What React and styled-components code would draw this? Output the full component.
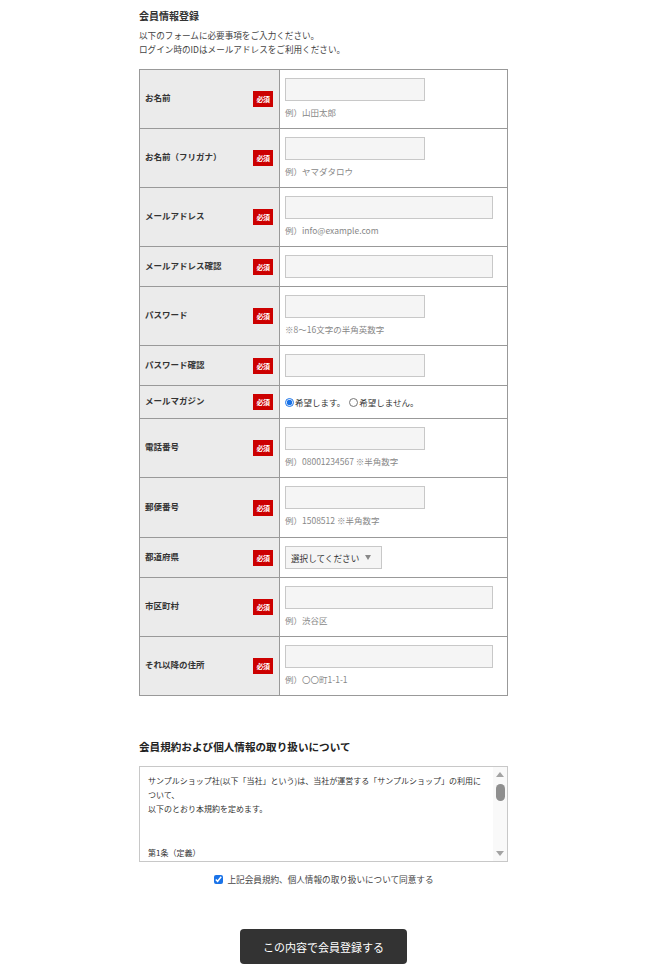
import React from "react";
import styled, { createGlobalStyle } from "styled-components";

const GlobalStyle = createGlobalStyle`
  html, body {
    margin: 0;
    padding: 0;
    background: #ffffff;
  }
  body {
    font-family: "Noto Sans CJK JP", "Noto Sans", sans-serif;
    color: #333333;
  }
`;

const rows = [
  { label: "お名前", type: "input", size: "short", hint: "例）山田太郎" },
  { label: "お名前（フリガナ）", type: "input", size: "short", hint: "例）ヤマダタロウ" },
  { label: "メールアドレス", type: "input", size: "wide", hint: "例）info@example.com" },
  { label: "メールアドレス確認", type: "input", size: "wide" },
  { label: "パスワード", type: "input", size: "short", hint: "※8～16文字の半角英数字" },
  { label: "パスワード確認", type: "input", size: "short" },
  { label: "メールマガジン", type: "radio" },
  { label: "電話番号", type: "input", size: "short", hint: "例）08001234567 ※半角数字" },
  { label: "郵便番号", type: "input", size: "short", hint: "例）1508512 ※半角数字", tall: true },
  { label: "都道府県", type: "select" },
  { label: "市区町村", type: "input", size: "wide", hint: "例）渋谷区" },
  { label: "それ以降の住所", type: "input", size: "wide", hint: "例）〇〇町1-1-1" },
];

const App = () => {
  return (
    <>
      <GlobalStyle />
      <Page>
        <Title>会員情報登録</Title>
        <Intro>
          以下のフォームに必要事項をご入力ください。
          <br />
          ログイン時のIDはメールアドレスをご利用ください。
        </Intro>

        <FormTable>
          {rows.map((row) => (
            <Row key={row.label}>
              <LabelCell>
                <LabelText>{row.label}</LabelText>
                <Required>必須</Required>
              </LabelCell>
              <FieldCell $tall={row.tall}>
                {row.type === "input" && <TextInput $size={row.size} />}
                {row.type === "radio" && (
                  <RadioGroup>
                    <RadioLabel>
                      <Radio type="radio" name="mag" defaultChecked />
                      希望します。
                    </RadioLabel>
                    <RadioLabel>
                      <Radio type="radio" name="mag" />
                      希望しません。
                    </RadioLabel>
                  </RadioGroup>
                )}
                {row.type === "select" && (
                  <SelectBox>
                    選択してください
                    <Caret />
                  </SelectBox>
                )}
                {row.hint && <Hint>{row.hint}</Hint>}
              </FieldCell>
            </Row>
          ))}
        </FormTable>

        <SectionTitle>会員規約および個人情報の取り扱いについて</SectionTitle>
        <TermsBox>
          <TermsText>
            <p>
              サンプルショップ社(以下「当社」という)は、当社が運営する「サンプルショップ」の利用について、
              <br />
              以下のとおり本規約を定めます。
            </p>
            <p>第1条（定義）</p>
          </TermsText>
          <ScrollTrack>
            <ArrowUp />
            <Thumb />
            <Spacer />
            <ArrowDown />
          </ScrollTrack>
        </TermsBox>

        <AgreeRow>
          <Check type="checkbox" defaultChecked />
          上記会員規約、個人情報の取り扱いについて同意する
        </AgreeRow>

        <ButtonRow>
          <SubmitButton>この内容で会員登録する</SubmitButton>
        </ButtonRow>
      </Page>
    </>
  );
};

// Styles
const Page = styled.div`
  width: 369px;
  margin-left: 139px;
  padding-top: 8px;
`;

const Title = styled.h1`
  margin: 0;
  font-size: 10px;
  line-height: 15px;
  font-weight: 700;
  color: #333;
`;

const Intro = styled.p`
  margin: 5px 0 0;
  font-size: 8.6px;
  line-height: 14px;
  color: #444;
`;

const FormTable = styled.div`
  margin-top: 13px;
  border: 1px solid #999;
  border-top: none;
`;

const Row = styled.div`
  display: grid;
  grid-template-columns: 140px 1fr;
  border-top: 1px solid #999;
`;

const LabelCell = styled.div`
  box-sizing: border-box;
  background: #ebebeb;
  border-right: 1px solid #999;
  display: flex;
  align-items: center;
  justify-content: space-between;
  padding: 0 6px 0 5px;
`;

const LabelText = styled.span`
  font-size: 8.5px;
  font-weight: 700;
  color: #333;
  margin-top: -4px;
`;

const Required = styled.span`
  width: 20px;
  height: 16px;
  background: #cc0000;
  color: #fff;
  font-size: 7px;
  font-weight: 700;
  line-height: 16px;
  text-align: center;
  letter-spacing: -0.5px;
`;

const FieldCell = styled.div`
  padding: 8px 5px ${(p) => (p.$tall ? "9px" : "8px")};
  display: flex;
  flex-direction: column;
  align-items: flex-start;
`;

const TextInput = styled.input`
  box-sizing: border-box;
  width: ${(p) => (p.$size === "wide" ? "208px" : "140px")};
  height: 23px;
  margin: 0;
  background: #f5f5f5;
  border: 1px solid #c8c8c8;
  border-radius: 0;
  outline: none;
`;

const Hint = styled.span`
  margin-top: 4px;
  font-size: 8.5px;
  line-height: 15px;
  color: #888;
`;

const RadioGroup = styled.div`
  display: flex;
  gap: 4px;
  height: 16px;
  align-items: center;
`;

const RadioLabel = styled.label`
  display: flex;
  align-items: center;
  font-size: 8.5px;
  color: #333;
`;

const Radio = styled.input`
  width: 9px;
  height: 9px;
  margin: 0 1px 0 0;
  accent-color: #1a73e8;
`;

const SelectBox = styled.div`
  box-sizing: border-box;
  width: 97px;
  height: 23px;
  background: #f5f5f5;
  border: 1px solid #c8c8c8;
  display: flex;
  align-items: center;
  padding-left: 5px;
  font-size: 8.6px;
  color: #333;
`;

const Caret = styled.span`
  margin-left: 6px;
  width: 0;
  height: 0;
  border-left: 3.5px solid transparent;
  border-right: 3.5px solid transparent;
  border-top: 5px solid #888;
`;

const SectionTitle = styled.h2`
  margin: 43px 0 0;
  font-size: 10.6px;
  line-height: 15px;
  font-weight: 700;
  color: #222;
`;

const TermsBox = styled.div`
  margin-top: 12px;
  box-sizing: border-box;
  height: 96px;
  border: 1px solid #c8c8c8;
  display: flex;
`;

const TermsText = styled.div`
  flex: 1;
  overflow: hidden;
  padding: 7px 8px 0;
  font-size: 8px;
  line-height: 13.8px;
  color: #333;

  p {
    margin: 0 0 31px;
  }
`;

const ScrollTrack = styled.div`
  width: 14px;
  background: #f9f9f9;
  display: flex;
  flex-direction: column;
  align-items: center;
  padding: 5px 0;
`;

const ArrowUp = styled.span`
  width: 0;
  height: 0;
  border-left: 4px solid transparent;
  border-right: 4px solid transparent;
  border-bottom: 5px solid #a3a3a3;
`;

const ArrowDown = styled.span`
  width: 0;
  height: 0;
  border-left: 4px solid transparent;
  border-right: 4px solid transparent;
  border-top: 5px solid #a3a3a3;
`;

const Thumb = styled.span`
  margin-top: 7px;
  width: 9px;
  height: 17px;
  border-radius: 5px;
  background: #8f8f8f;
`;

const Spacer = styled.span`
  flex: 1;
`;

const AgreeRow = styled.label`
  margin-top: 10px;
  display: flex;
  align-items: center;
  justify-content: center;
  font-size: 8.6px;
  line-height: 14px;
  color: #444;
`;

const Check = styled.input`
  width: 9px;
  height: 9px;
  margin: 0 5px 0 0;
  accent-color: #1a73e8;
`;

const ButtonRow = styled.div`
  display: flex;
  justify-content: center;
  margin-top: 43px;
`;

const SubmitButton = styled.button`
  width: 167px;
  height: 35px;
  border: none;
  border-radius: 4px;
  background: #333333;
  color: #ffffff;
  font-family: "Noto Sans CJK JP", sans-serif;
  font-size: 11px;
  cursor: pointer;
`;

export default App;
